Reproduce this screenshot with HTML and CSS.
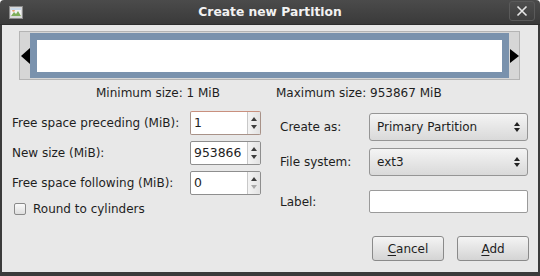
FILE: index.html
```html
<!DOCTYPE html>
<html lang="en">
<head>
    <meta charset="UTF-8">
    <title>Create new Partition</title>
    <link rel="stylesheet" href="styles.css">
</head>
<body>

    <div class="window">
        <div class="titlebar">
            <div class="title-icon">
                <svg width="14" height="13" viewBox="0 0 14 13">
                    <rect x="0.5" y="0.5" width="13" height="12" fill="#d8d8d8" stroke="#8a8a8a"/>
                    <rect x="2" y="2" width="10" height="8" fill="#f4f4f4"/>
                    <path d="M2 10 L5 6 L7 8 L9 5 L12 10 Z" fill="#7fae5a"/>
                    <circle cx="4.5" cy="4.5" r="1.3" fill="#e9a06a"/>
                    <rect x="2" y="2" width="10" height="2" fill="#c9d9ea"/>
                </svg>
            </div>
            <div class="title">Create new Partition</div>
            <div class="close-btn">
                <svg width="12" height="12" viewBox="0 0 12 12">
                    <path d="M1.5 1.5 L10.5 10.5 M10.5 1.5 L1.5 10.5" stroke="#e6e6e6" stroke-width="1.6" fill="none"/>
                </svg>
            </div>
        </div>

        <div class="body">
            <!-- partition graphic -->
            <div class="partbar">
                <div class="partbar-side"><span class="arrow-left"></span></div>
                <div class="partbar-frame"><div class="partbar-inner"></div></div>
                <div class="partbar-side"><span class="arrow-right"></span></div>
            </div>

            <div class="sizes">
                <div class="size-min">Minimum size: 1 MiB</div>
                <div class="size-max">Maximum size: 953867 MiB</div>
            </div>

            <div class="form">
                <div class="form-left">
                    <div class="row">
                        <label class="row-label">Free space preceding (MiB):</label>
                        <div class="spin focused">
                            <span class="spin-value">1</span>
                            <span class="spin-btns"><i class="up"></i><i class="down"></i></span>
                        </div>
                    </div>
                    <div class="row">
                        <label class="row-label">New size (MiB):</label>
                        <div class="spin">
                            <span class="spin-value">953866</span>
                            <span class="spin-btns"><i class="up"></i><i class="down"></i></span>
                        </div>
                    </div>
                    <div class="row">
                        <label class="row-label">Free space following (MiB):</label>
                        <div class="spin">
                            <span class="spin-value">0</span>
                            <span class="spin-btns"><i class="up"></i><i class="down disabled"></i></span>
                        </div>
                    </div>
                    <div class="check-row">
                        <span class="checkbox"></span>
                        <span>Round to cylinders</span>
                    </div>
                </div>

                <div class="form-right">
                    <div class="rrow">
                        <label class="rrow-label">Create as:</label>
                        <div class="combo">
                            <span>Primary Partition</span>
                            <span class="combo-arrows"><i class="up"></i><i class="down"></i></span>
                        </div>
                    </div>
                    <div class="rrow">
                        <label class="rrow-label">File system:</label>
                        <div class="combo">
                            <span>ext3</span>
                            <span class="combo-arrows"><i class="up"></i><i class="down"></i></span>
                        </div>
                    </div>
                    <div class="rrow label-row">
                        <label class="rrow-label">Label:</label>
                        <div class="entry"></div>
                    </div>
                </div>
            </div>

            <div class="buttons">
                <button class="btn"><u>C</u>ancel</button>
                <button class="btn"><u>A</u>dd</button>
            </div>
        </div>
    </div>

</body>
</html>
```

FILE: styles.css
```css
:root {
    --bg: #e8e8e8;
    --frame: #3b3b3b;
    --text: #1e1e1e;
    --border: #8e8e8e;
    --blue: #7a92ad;
}

* {
    box-sizing: border-box;
}

body {
    margin: 0;
    background: #ffffff;
    font-family: 'DejaVu Sans', sans-serif;
    font-size: 12px;
    color: var(--text);
}

.window {
    width: 540px;
    height: 276px;
    display: flex;
    flex-direction: column;
}

/* -- title bar -- */
.titlebar {
    height: 25px;
    display: grid;
    grid-template-columns: 1fr auto 1fr;
    align-items: center;
    background: linear-gradient(#4b4b4b, #3a3a3a);
    border-radius: 4px 4px 0 0;
    border-bottom: 1px solid #2e2e2e;
}

.title-icon {
    padding-left: 9px;
    display: flex;
    padding-top: 1px;
}

.title {
    color: #f2f2f2;
    font-weight: bold;
    font-size: 12.3px;
}

.close-btn {
    justify-self: end;
    margin-right: 5px;
    width: 26px;
    height: 20px;
    margin-top: -2px;
    border: 1px solid #5a5a5a;
    border-radius: 3px;
    background: linear-gradient(#4e4e4e, #3e3e3e);
    display: flex;
    align-items: center;
    justify-content: center;
}

/* -- body -- */
.body {
    flex: 1;
    background: var(--bg);
    border-left: 2px solid var(--frame);
    border-right: 2px solid var(--frame);
    border-bottom: 4px solid var(--frame);
}

.partbar {
    margin: 6px 18px 0 17px;
    height: 49px;
    display: flex;
    align-items: center;
    border: 1px solid #b4b4b4;
    background: #d6d6d6;
}

.partbar-side {
    width: 10px;
    height: 100%;
    display: flex;
    align-items: center;
    justify-content: center;
}

.arrow-left {
    width: 0;
    height: 0;
    border-top: 8px solid transparent;
    border-bottom: 8px solid transparent;
    border-right: 9px solid #000;
}

.arrow-right {
    width: 0;
    height: 0;
    border-top: 7px solid transparent;
    border-bottom: 7px solid transparent;
    border-left: 9px solid #000;
}

.partbar-frame {
    flex: 1;
    height: 45px;
    border: solid var(--blue);
    border-width: 7px 7px 6px 7px;
    background: #ffffff;
}

.sizes {
    margin-top: 6px;
    display: grid;
    grid-template-columns: 274px 1fr;
    line-height: 14px;
}

.size-min {
    padding-left: 94px;
}

/* -- form -- */
.form {
    margin-top: 11px;
    display: grid;
    grid-template-columns: 249px 1fr;
    column-gap: 19px;
    padding-left: 10px;
}

.form-left {
    display: flex;
    flex-direction: column;
    gap: 6px;
}

.row {
    display: flex;
    align-items: center;
    height: 24px;
}

.row-label {
    width: 178px;
}

.spin {
    width: 71px;
    height: 24px;
    display: flex;
    border: 1px solid var(--border);
    background: #ffffff;
    border-radius: 2px;
}

.spin.focused {
    border-color: #a89288;
    border-top-color: #c9907e;
}

.spin-value {
    flex: 1;
    padding-left: 3px;
    line-height: 22px;
    font-size: 12.4px;
}

.spin-btns {
    width: 13px;
    display: flex;
    flex-direction: column;
    align-items: center;
    justify-content: center;
    gap: 4px;
    border-left: 1px solid #c8c8c8;
    background: linear-gradient(90deg, #f4f4f4, #e2e2e2);
}

.up, .down {
    display: block;
    width: 0;
    height: 0;
    border-left: 3px solid transparent;
    border-right: 3px solid transparent;
}

.up {
    border-bottom: 4px solid #3c3c3c;
}

.down {
    border-top: 4px solid #3c3c3c;
}

.down.disabled {
    border-top-color: #a8a8a8;
}

.check-row {
    display: flex;
    align-items: center;
    gap: 7px;
    height: 16px;
    padding-left: 2px;
}

.checkbox {
    width: 12px;
    height: 12px;
    border: 1px solid #8a8a8a;
    border-radius: 2px;
    background: linear-gradient(#fafafa, #dedede);
}

.form-right {
    padding-top: 2px;
    padding-right: 10px;
    display: flex;
    flex-direction: column;
    gap: 7px;
}

.rrow {
    display: flex;
    align-items: center;
}

.rrow-label {
    width: 89px;
}

.combo {
    flex: 1;
    height: 28px;
    display: flex;
    align-items: center;
    justify-content: space-between;
    padding: 0 7px 0 7px;
    border: 1px solid #959595;
    border-radius: 3px;
    background: linear-gradient(#f4f4f4, #d9d9d9);
}

.combo-arrows {
    display: flex;
    flex-direction: column;
    gap: 2px;
}

.combo-arrows .up {
    border-bottom-width: 4px;
    border-bottom-color: #222;
}

.combo-arrows .down {
    border-top-width: 4px;
    border-top-color: #222;
}

.label-row {
    margin-top: 7px;
}

.entry {
    flex: 1;
    height: 23px;
    background: #ffffff;
    border: 1px solid #9a9a9a;
    border-radius: 2px;
}

/* -- action buttons -- */
.buttons {
    margin-top: 19px;
    display: flex;
    justify-content: flex-end;
    gap: 13px;
    padding-right: 9px;
}

.btn {
    width: 72px;
    height: 25px;
    font-family: 'DejaVu Sans', sans-serif;
    font-size: 12px;
    color: var(--text);
    border: 1px solid #8a8a8a;
    border-radius: 3px;
    background: linear-gradient(#f4f4f4, #d4d4d4);
    padding: 0;
}

.btn u {
    text-decoration-thickness: 1px;
    text-underline-offset: 2px;
}
```
